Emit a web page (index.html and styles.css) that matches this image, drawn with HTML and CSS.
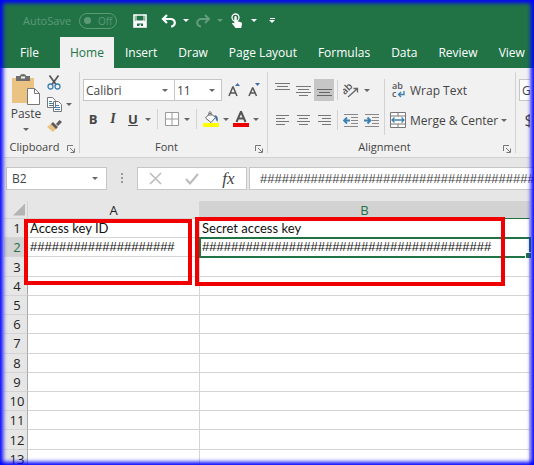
FILE: index.html
```html
<!DOCTYPE html>
<html lang="en">
<head>
    <meta charset="UTF-8">
    <meta name="viewport" content="width=device-width, initial-scale=1.0">
    <title>Access keys</title>
    <link rel="stylesheet" href="styles.css">
</head>
<body>
    <div class="window">
        <header class="titlebar">
            <span class="autosave">AutoSave</span>
            <button class="toggle"><span class="knob"></span>Off</button>
            <div class="quick">
                <button class="tool" aria-label="Save">
                    <svg width="14" height="14" viewBox="0 0 14 14"><path d="M1 1h12v12H1z" fill="none" stroke="#fff" stroke-width="1.600"/><path d="M3 1v6h8V1" fill="none" stroke="#fff"/><path d="M1 7h12v6H1z" fill="#fff"/><path d="M4 9.500h6V12H8v-1.500H6.500V12H4z" fill="#217346"/></svg>
                </button>
                <button class="tool undo" aria-label="Undo">
                    <svg width="16" height="14" viewBox="0 0 16 14"><path d="M6 1L2 5l4 4M2 5h7.500a4 3.700 0 0 1 .5 7.500" fill="none" stroke="#fff" stroke-width="2.200"/></svg>
                </button>
                <button class="caret" aria-label="Undo list"></button>
                <button class="tool dim" aria-label="Redo">
                    <svg width="16" height="14" viewBox="0 0 16 14"><path d="M10 1l4 4-4 4M14 5H6.500a4 3.700 0 0 0-.5 7.500" fill="none" stroke="#fff" stroke-width="2"/></svg>
                </button>
                <button class="caret dim" aria-label="Redo list"></button>
                <button class="tool" aria-label="Touch mode">
                    <svg width="14" height="16" viewBox="0 0 14 16"><circle cx="5.500" cy="4.500" r="3.500" fill="none" stroke="#fff" stroke-width="1.300"/><path d="M4.300 4.300a1.200 1.200 0 0 1 2.400 0V8l4.300 1.200q1.300.4 1 1.800L11.200 15H5.500L2 10.500q.8-1.300 2.300 0z" fill="#fff"/></svg>
                </button>
                <button class="caret" aria-label="Touch options"></button>
                <button class="caret bar" aria-label="Customize toolbar"></button>
            </div>
        </header>

        <nav class="tabs">
            <a href="#" class="file">File</a>
            <a href="#" class="active">Home</a>
            <a href="#">Insert</a>
            <a href="#">Draw</a>
            <a href="#">Page Layout</a>
            <a href="#">Formulas</a>
            <a href="#">Data</a>
            <a href="#">Review</a>
            <a href="#">View</a>
        </nav>

        <div class="ribbon">
            <section class="group clipboard">
                <div class="tools">
                    <button class="paste">
                        <svg width="28" height="31" viewBox="0 0 28 31"><path d="M0 4h22v25H0z" fill="#eac282"/><path d="M4 2h4q0-2 3-2t3 2h4v5H4z" fill="#6d6d6d"/><path d="M9 2.500h4v2H9z" fill="#f1f1f1"/><path d="M15.500 14.500h7l5 5v11h-12z" fill="#fff" stroke="#777"/><path d="M22.500 14.500v5h5" fill="none" stroke="#777"/></svg>
                        Paste
                        <i class="arrow"></i>
                    </button>
                    <div class="stack">
                        <button class="tool" aria-label="Cut">
                            <svg width="14" height="15" viewBox="0 0 14 15"><path d="M2.500.5L9 9.500M11.500.5L5 9.500" stroke="#555" stroke-width="1.700"/><circle cx="3.500" cy="11.500" r="2.500" fill="none" stroke="#3f7fb0" stroke-width="1.300"/><circle cx="10.500" cy="11.500" r="2.500" fill="none" stroke="#3f7fb0" stroke-width="1.300"/></svg>
                        </button>
                        <div class="row">
                            <button class="tool" aria-label="Copy">
                                <svg width="15" height="15" viewBox="0 0 15 15"><path d="M.5.5h5l3 3v7h-8zM6.500 4.500h5l3 3v7h-8z" fill="#fff" stroke="#777"/><path d="M2 4.500h3M2 6.500h4M2 8.500h4M8 8.500h4M8 10.500h5M8 12.500h5" stroke="#3f7fb0"/></svg>
                            </button>
                            <button class="caret" aria-label="Copy options"></button>
                        </div>
                        <button class="tool" aria-label="Format Painter">
                            <svg width="15" height="13" viewBox="0 0 15 13"><path d="M5 3L0 7l6 5 4-4z" fill="#eac282"/><path d="M6 2l5 5-2 2-5-5zM9 4l3.500-4L15 2l-4 4z" fill="#5c5c5c"/></svg>
                        </button>
                    </div>
                </div>
                <div class="caption">Clipboard<button class="launcher" aria-label="Clipboard settings"><svg width="8" height="8" viewBox="0 0 8 8"><path d="M.5 6V.5H6M3 3l4 4M7.500 3.500v4h-4" fill="none" stroke="#777"/></svg></button></div>
            </section>

            <section class="group font">
                <div class="tools">
                    <div class="row">
                        <label class="combo family"><select aria-label="Font"><option>Calibri</option></select><i class="arrow"></i></label>
                        <label class="combo size"><select aria-label="Font size"><option>11</option></select><i class="arrow"></i></label>
                        <button class="tool grow" aria-label="Increase font size"><svg width="13" height="14" viewBox="0 0 13 14"><path d="M1 13L4.800 4h.4L9 13M2.500 10h5" fill="none" stroke="#555" stroke-width="1.500"/><path d="M7 3l2.500-3L12 3z" fill="#3f6fa8"/></svg></button>
                        <button class="tool" aria-label="Decrease font size"><svg width="13" height="14" viewBox="0 0 13 14"><path d="M1 13L4.500 5h.4L8.500 13M2.500 10h5" fill="none" stroke="#555" stroke-width="1.500"/><path d="M7 0l2.500 3L12 0z" fill="#3f6fa8"/></svg></button>
                    </div>
                    <div class="row">
                        <button class="tool letter bold">B</button>
                        <button class="tool letter italic">I</button>
                        <button class="tool letter underline">U</button>
                        <button class="caret" aria-label="Underline styles"></button>
                        <span class="divider"></span>
                        <button class="tool" aria-label="Borders"><svg width="14" height="14" viewBox="0 0 14 14"><path d="M.5.5h13v13H.5zM7 0v14M0 7h14" fill="#fff" stroke="#999"/></svg></button>
                        <button class="caret" aria-label="Border styles"></button>
                        <span class="divider"></span>
                        <button class="tool" aria-label="Fill color"><svg width="16" height="16" viewBox="0 0 16 16"><path d="M7 2L2.500 7 8 11.500 12.500 6.500z" fill="#fff" stroke="#666"/><path d="M6 5V1.500Q7-.5 8 1.500V5" fill="none" stroke="#666"/><path d="M11 4q5 0 3.500 7Q12.500 9 12 5z" fill="#3f6fa8"/><path d="M0 12h16v4H0z" fill="#ff0"/></svg></button>
                        <button class="caret" aria-label="Fill colors"></button>
                        <button class="tool" aria-label="Font color"><svg width="16" height="16" viewBox="0 0 16 16"><path d="M3.500 11L7.800 1h.4l4.300 10M5 7.500h6" fill="none" stroke="#555" stroke-width="2"/><path d="M0 12h16v4H0z" fill="#e00"/></svg></button>
                        <button class="caret" aria-label="Font colors"></button>
                    </div>
                </div>
                <div class="caption">Font<button class="launcher" aria-label="Font settings"><svg width="8" height="8" viewBox="0 0 8 8"><path d="M.5 6V.5H6M3 3l4 4M7.500 3.500v4h-4" fill="none" stroke="#777"/></svg></button></div>
            </section>

            <section class="group alignment">
                <div class="tools">
                    <div class="stack">
                        <div class="row">
                            <button class="tool" aria-label="Top align"><svg width="15" height="14" viewBox="0 0 15 14"><path d="M0 .5h15M2 3.500h11M0 6.500h15" stroke="#777"/></svg></button>
                            <button class="tool" aria-label="Middle align"><svg width="15" height="14" viewBox="0 0 15 14"><path d="M0 3.500h15M2 6.500h11M0 9.500h15M3 12.500h9" stroke="#777"/></svg></button>
                            <button class="tool pressed" aria-label="Bottom align"><svg width="15" height="14" viewBox="0 0 15 14"><path d="M0 6.500h15M2 9.500h11M0 12.500h15" stroke="#666"/></svg></button>
                            <span class="divider"></span>
                            <button class="tool" aria-label="Orientation"><svg width="16" height="15" viewBox="0 0 16 15"><g transform="rotate(-45 6 8)"><text x="0" y="8" font-size="10">ab</text></g><path d="M5 14l9-8M10.500 5.500h4v4" fill="none" stroke="#666" stroke-width="1.300"/></svg></button>
                            <button class="caret" aria-label="Orientation options"></button>
                        </div>
                        <div class="row">
                            <button class="tool" aria-label="Align left"><svg width="13" height="10" viewBox="0 0 13 10"><path d="M0 .5h13M0 3.500h9M0 6.500h13M0 9.500h9" stroke="#777"/></svg></button>
                            <button class="tool" aria-label="Center"><svg width="13" height="10" viewBox="0 0 13 10"><path d="M0 .5h13M2 3.500h9M0 6.500h13M2 9.500h9" stroke="#777"/></svg></button>
                            <button class="tool" aria-label="Align right"><svg width="13" height="10" viewBox="0 0 13 10"><path d="M0 .5h13M4 3.500h9M0 6.500h13M4 9.500h9" stroke="#777"/></svg></button>
                            <span class="divider"></span>
                            <button class="tool" aria-label="Decrease indent"><svg width="16" height="13" viewBox="0 0 16 13"><path d="M1 .5h14M8 3.500h7M8 6.500h7M8 9.500h7M1 12.500h14" stroke="#888"/><path d="M7 6.500H1M4 3.500l-3 3 3 3" fill="none" stroke="#3f7fb0" stroke-width="1.800"/></svg></button>
                            <button class="tool" aria-label="Increase indent"><svg width="16" height="13" viewBox="0 0 16 13"><path d="M1 .5h14M8 3.500h7M8 6.500h7M8 9.500h7M1 12.500h14" stroke="#888"/><path d="M0 6.500h6M3.500 3.500l3 3-3 3" fill="none" stroke="#3f7fb0" stroke-width="1.800"/></svg></button>
                        </div>
                    </div>
                    <span class="divider tall"></span>
                    <div class="stack">
                        <button class="wide"><svg width="16" height="16" viewBox="0 0 16 16"><text x="2" y="7" font-size="9">ab</text><text x="2" y="15" font-size="9">c</text><path d="M14 9v3.500H9M11 10l-2.500 2.500L11 15" fill="none" stroke="#3f7fb0" stroke-width="1.300"/></svg>Wrap Text</button>
                        <div class="row">
                            <button class="wide"><svg width="16" height="16" viewBox="0 0 16 16"><path d="M.5.5h15v15H.5zM8 0v4M8 12v4" fill="#fff" stroke="#777"/><path d="M0 4h16M0 12h16" stroke="#777"/><path d="M2 8h12M4.500 5.500L2 8l2.500 2.500M11.500 5.500L14 8l-2.500 2.500" fill="none" stroke="#3f7fb0" stroke-width="1.300"/></svg>Merge &amp; Center</button>
                            <button class="caret" aria-label="Merge options"></button>
                        </div>
                    </div>
                </div>
                <div class="caption">Alignment<button class="launcher" aria-label="Alignment settings"><svg width="8" height="8" viewBox="0 0 8 8"><path d="M.5 6V.5H6M3 3l4 4M7.500 3.500v4h-4" fill="none" stroke="#777"/></svg></button></div>
            </section>

            <section class="group number">
                <div class="tools">
                    <label class="combo format"><select aria-label="Number format"><option>General</option></select></label>
                    <button class="tool dollar">$</button>
                </div>
            </section>
        </div>

        <div class="formula-bar">
            <label class="combo namebox"><input type="text" value="B2" aria-label="Name box"><i class="arrow"></i></label>
            <span class="grip"></span>
            <div class="actions">
                <button aria-label="Cancel"><svg width="13" height="13" viewBox="0 0 13 13"><path d="M1 1l11 11M12 1L1 12" stroke="#bbb" stroke-width="1.500"/></svg></button>
                <button aria-label="Enter"><svg width="14" height="12" viewBox="0 0 14 12"><path d="M1 6l4 4.500L13 1" fill="none" stroke="#bbb" stroke-width="2"/></svg></button>
                <button class="fx">fx</button>
            </div>
            <input class="formula" type="text" value="########################################" aria-label="Formula">
        </div>

        <main class="sheet">
            <table>
                <colgroup><col class="nums"><col class="col-a"><col></colgroup>
                <thead>
                    <tr><th><span class="corner"></span></th><th>A</th><th class="current">B</th></tr>
                </thead>
                <tbody>
                    <tr><th>1</th><td>Access key ID</td><td>Secret access key</td></tr>
                    <tr><th class="current">2</th><td class="masked">####################</td><td class="masked selected">########################################</td></tr>
                    <tr><th>3</th><td></td><td></td></tr>
                    <tr><th>4</th><td></td><td></td></tr>
                    <tr><th>5</th><td></td><td></td></tr>
                    <tr><th>6</th><td></td><td></td></tr>
                    <tr><th>7</th><td></td><td></td></tr>
                    <tr><th>8</th><td></td><td></td></tr>
                    <tr><th>9</th><td></td><td></td></tr>
                    <tr><th>10</th><td></td><td></td></tr>
                    <tr><th>11</th><td></td><td></td></tr>
                    <tr><th>12</th><td></td><td></td></tr>
                    <tr><th>13</th><td></td><td></td></tr>
                </tbody>
            </table>
            <div class="mark mark-id"></div>
            <div class="mark mark-secret"></div>
        </main>
    </div>
</body>
</html>
```
FILE: styles.css
```css
* {
    box-sizing: border-box;
}
body {
    margin: 0;
    font-family: "Open Sans", "Noto Sans", sans-serif;
    font-size: 12px;
    color: #444;
    background: #fff;
}
.window {
    position: relative;
    height: 100vh;
    overflow: hidden;
    padding: 0 4px;
    display: flex;
    flex-direction: column;
    background: #e6e6e6;
}
/* blue glow around the window */
.window::after {
    content: "";
    position: absolute;
    inset: 0;
    box-shadow: inset 0 0 4px 3px #00f;
    pointer-events: none;
}
button, input, select {
    font: inherit;
    color: inherit;
    border: none;
    padding: 0;
    margin: 0;
    background: none;
}
button svg {
    display: block;
    flex: none;
}
svg text {
    font-family: "Open Sans", sans-serif;
    font-weight: 600;
    fill: #555;
}
.titlebar, .tabs {
    background: #217346;
    color: #fff;
    margin: 0 -4px;
    flex: none;
}
.titlebar {
    height: 37px;
    padding: 4px 0 0 23px;
    display: flex;
    align-items: center;
}
.autosave {
    width: 56px;
    font-size: 11px;
    color: #5c9a76;
}
.toggle {
    width: 38px;
    height: 16px;
    border: 1px solid #5c9a76;
    border-radius: 8px;
    color: #5c9a76;
    font-size: 10px;
    display: flex;
    align-items: center;
    gap: 7px;
    padding-left: 4px;
}
.knob {
    width: 7px;
    height: 7px;
    border-radius: 50%;
    background: #5c9a76;
}
.quick {
    display: flex;
    align-items: center;
    margin-left: 13px;
}
.undo {
    margin-left: 9px;
}
.tool {
    width: 20px;
    height: 20px;
    flex: none;
    display: flex;
    align-items: center;
    justify-content: center;
}
.caret {
    width: 10px;
    height: 20px;
    flex: none;
    display: flex;
    flex-direction: column;
    align-items: center;
    justify-content: center;
}
.caret::before, .arrow {
    content: "";
    border: 3px solid transparent;
    border-top-color: #666;
    border-bottom: none;
}
.quick .caret {
    width: 14px;
}
.quick .caret::before {
    border-top-color: #fff;
}
.quick .bar {
    margin-left: 4px;
}
.bar::after {
    content: "";
    order: -1;
    width: 5px;
    height: 1px;
    margin-bottom: 1px;
    background: #fff;
}
.dim {
    opacity: 0.3;
}
.tabs {
    height: 31px;
    display: flex;
    gap: 1px;
}
.tabs a {
    padding: 0 10px;
    line-height: 31px;
    color: #fff;
    text-decoration: none;
    white-space: nowrap;
}
.tabs .file {
    padding: 0 20px;
}
.tabs .active {
    background: #f1f1f1;
    color: #217346;
}
.ribbon {
    height: 90px;
    flex: none;
    display: flex;
    background: #f1f1f1;
    border-bottom: 1px solid #d2d2d2;
    margin-bottom: 9px;
    padding: 4px 0;
    overflow: hidden;
}
.group {
    flex: none;
    display: flex;
    flex-direction: column;
    justify-content: space-between;
    border-right: 1px solid #d2d2d2;
}
.row {
    display: flex;
    align-items: center;
}
.caption {
    position: relative;
    font-size: 11px;
    line-height: 12px;
    text-align: center;
    padding-right: 14px;
}
.launcher {
    position: absolute;
    right: 4px;
    bottom: 0;
}
.clipboard {
    width: 76px;
}
.clipboard .tools {
    display: flex;
    padding-left: 4px;
}
.paste {
    width: 36px;
    padding-top: 2px;
    display: flex;
    flex-direction: column;
    align-items: center;
    line-height: 18px;
}
.paste .arrow {
    margin-top: 5px;
}
.clipboard .stack {
    display: flex;
    flex-direction: column;
    gap: 2px;
}
.font {
    width: 188px;
}
.font .tools {
    display: flex;
    flex-direction: column;
    gap: 8px;
    padding: 7px 0 0 3px;
}
.combo {
    display: grid;
    grid-template-columns: 1fr 12px;
    align-items: center;
    height: 22px;
    background: #fff;
    border: 1px solid #c6c6c6;
}
.combo select, .combo input {
    appearance: none;
    grid-area: 1 / 1 / 2 / 3;
    width: 100%;
    padding-left: 2px;
    outline: none;
}
.combo .arrow {
    grid-area: 1 / 2;
    width: 0;
    pointer-events: none;
}
.family {
    width: 92px;
}
.size {
    width: 48px;
    margin-left: -1px;
}
.grow {
    margin-left: 2px;
}
.letter {
    font-size: 13px;
    font-weight: 700;
}
.italic {
    font-family: "Liberation Serif", serif;
    font-size: 14px;
    font-style: italic;
}
.underline {
    text-decoration: underline;
}
.divider {
    width: 1px;
    height: 20px;
    margin: 0 4px;
    background: #d2d2d2;
}
.alignment {
    width: 248px;
}
.alignment .tools {
    display: flex;
    padding: 7px 0 0 4px;
}
.alignment .stack {
    display: flex;
    flex-direction: column;
    gap: 8px;
}
.alignment .row {
    height: 22px;
    gap: 1px;
}
.alignment .row .divider {
    margin: 0 2px;
}
.alignment .tall {
    height: 56px;
    margin: 0 4px 0 2px;
}
.pressed {
    height: 22px;
    background: #c6c6c6;
}
.wide {
    height: 22px;
    display: flex;
    align-items: center;
    gap: 4px;
    padding-left: 1px;
    white-space: nowrap;
}
.number {
    border: none;
    flex: 1;
    min-width: 0;
}
.number .tools {
    padding: 7px 0 0 3px;
}
.format {
    width: 80px;
}
.dollar {
    margin-top: 9px;
    font-size: 16px;
}
.formula-bar {
    height: 23px;
    flex: none;
    display: flex;
    margin: 0 -4px 11px 2px;
}
.formula-bar .combo {
    width: 101px;
    height: 23px;
    grid-template-columns: 1fr 14px;
}
.formula-bar .combo input {
    padding-left: 5px;
}
.grip {
    width: 2px;
    height: 10px;
    margin: 6px 14px;
    background: repeating-linear-gradient(#999 0 2px, transparent 2px 4px);
}
.actions {
    width: 110px;
    display: flex;
    justify-content: space-around;
    align-items: center;
    background: #fff;
    border: 1px solid #c6c6c6;
}
.fx {
    font: italic 17px/20px "Liberation Serif", serif;
    color: #444;
}
.formula {
    flex: 1;
    min-width: 0;
    margin-left: 2px;
    padding-left: 10px;
    background: #fff;
    border: 1px solid #c6c6c6;
    font: 13px "Liberation Sans", sans-serif;
}
.sheet {
    position: relative;
    flex: 1;
}
table {
    width: 100%;
    height: 268px;
    table-layout: fixed;
    border-collapse: separate;
    border-spacing: 0;
    background: #fff;
}
.nums {
    width: 24px;
}
.col-a {
    width: 172px;
}
th, td {
    padding: 0;
    border-right: 1px solid #d4d4d4;
    border-bottom: 1px solid #d4d4d4;
    line-height: 16px;
    white-space: nowrap;
}
th {
    font-size: 13px;
    font-weight: 400;
    background: #e6e6e6;
    color: #222;
}
thead th {
    height: 18px;
}
tbody th {
    border-right-color: #aaa;
    padding-left: 3px;
}
td {
    padding-left: 2px;
    font-family: Lato, sans-serif;
    font-size: 13px;
    text-align: left;
    color: #111;
}
.masked {
    font-family: "Liberation Sans", sans-serif;
}
th.current {
    background: #d2d2d2;
    color: #217346;
}
thead th.current {
    border-bottom: 1px solid #217346;
}
.selected {
    position: relative;
    outline: 2px solid #217346;
    outline-offset: -1px;
}
/* fill handle */
.selected::after {
    content: "";
    position: absolute;
    right: -2px;
    bottom: -2px;
    width: 5px;
    height: 5px;
    background: #217346;
    border: 1px solid #fff;
    border-width: 1px 0 0 1px;
}
.corner {
    display: block;
    width: 12px;
    height: 12px;
    margin-left: 9px;
    background: #b4b4b4;
    clip-path: polygon(100% 0, 100% 100%, 0 100%);
}
/* red callouts over the key columns */
.mark {
    position: absolute;
    border: 4px solid #f00000;
}
.mark-id {
    left: 20px;
    top: 18px;
    width: 168px;
    height: 66px;
}
.mark-secret {
    left: 191px;
    top: 16px;
    width: 310px;
    height: 69px;
}
```
